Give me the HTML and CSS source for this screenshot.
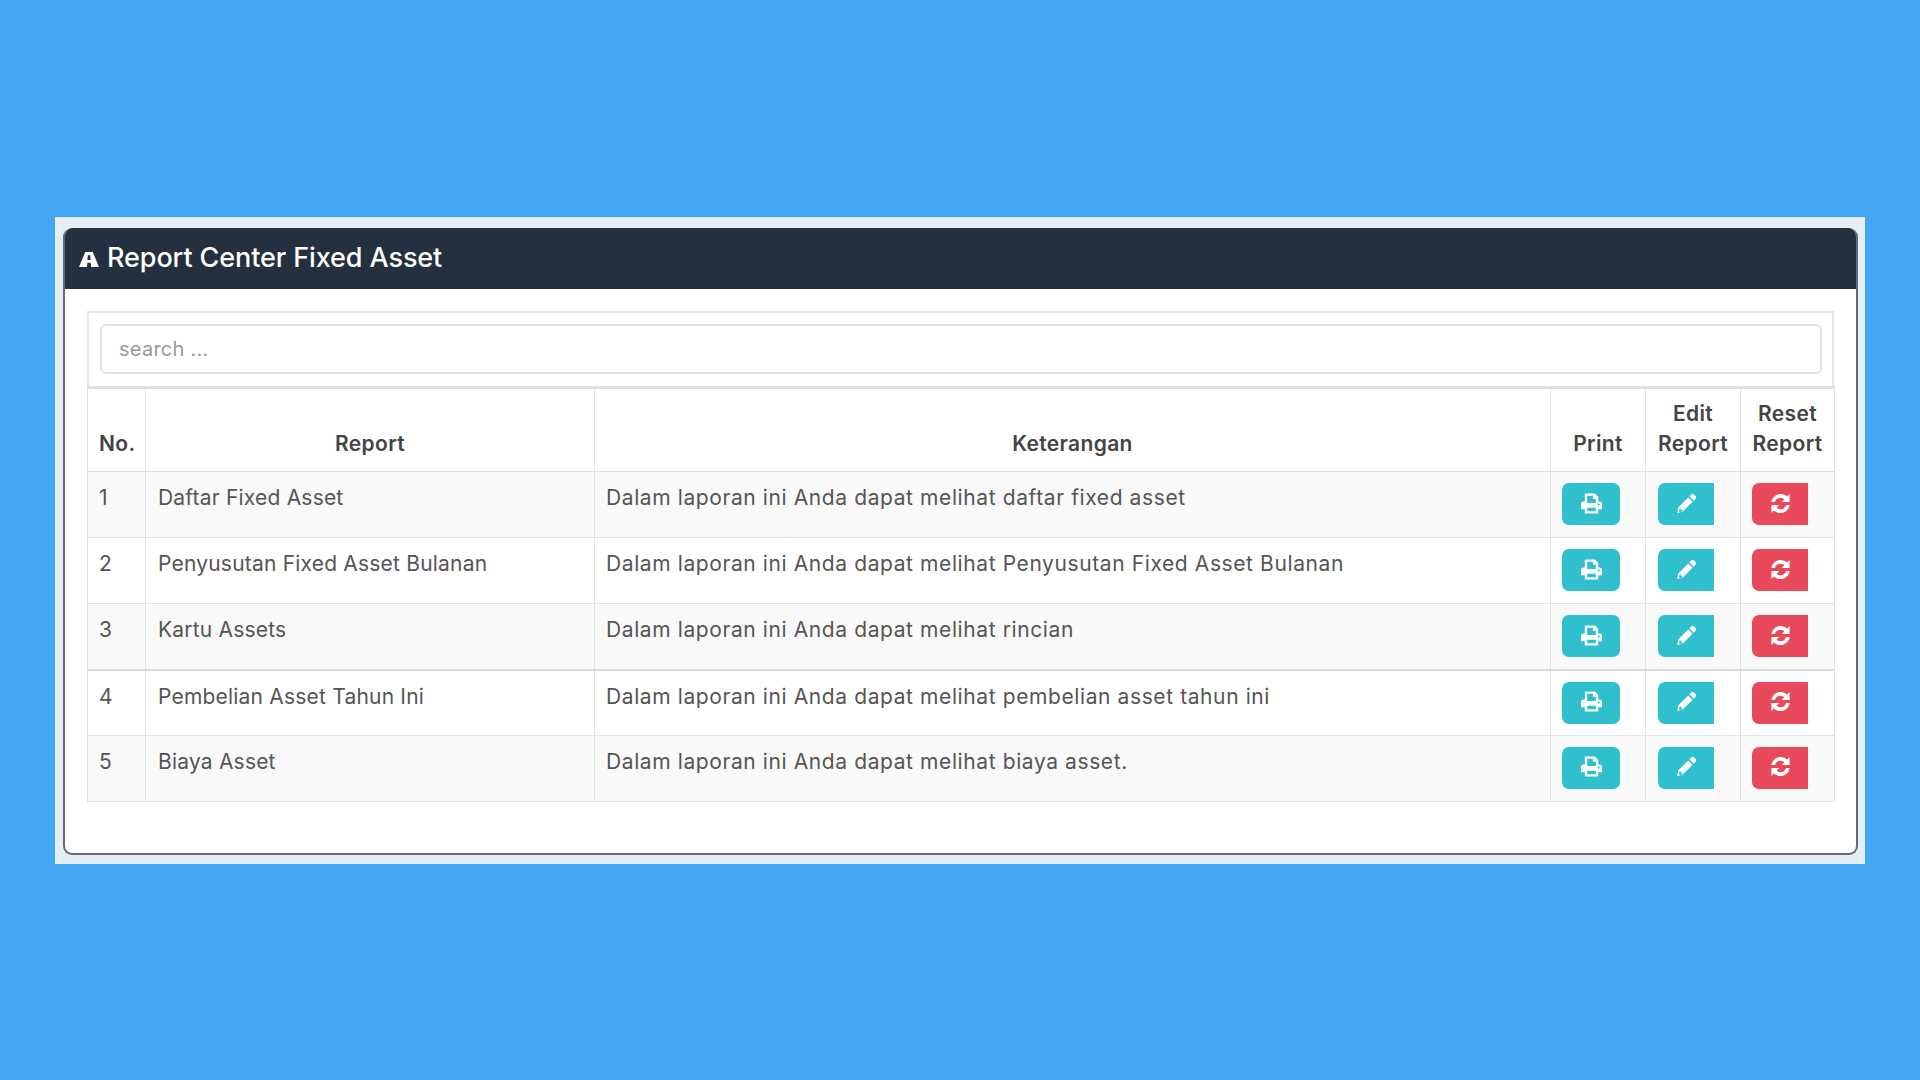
FILE: index.html
```html
<!DOCTYPE html>
<html lang="id">
<head>
<meta charset="utf-8">
<title>Report Center Fixed Asset</title>
<link rel="stylesheet" href="styles.css">
</head>
<body>
<svg class="defs" width="0" height="0" aria-hidden="true">
  <defs>
    <symbol id="i-print" viewBox="0 0 24 24">
      <path fill-rule="evenodd" d="M6 1.500h9.500L19 5v5h1.200A2.800 2.800 0 0 1 23 12.800V18h-4v4.500H5V18H1v-5.200A2.800 2.800 0 0 1 3.800 10H5V2.500a1 1 0 0 1 1-1zM7.500 4v7.500h9V7h-3V4zM7.500 16.500V20h9v-3.500zM19.500 12a1 1 0 1 0 .01 0z"/>
    </symbol>
    <symbol id="i-edit" viewBox="0 0 24 24">
      <path d="M17 2.500a2 2 0 0 1 2.800 0l1.700 1.700a2 2 0 0 1 0 2.800L19.500 9 15 4.500zM13.800 5.700l4.500 4.500L8 20.500l-5.800 1.500 1.300-6zM5 17l-.8 2.800 1 1L8 20l-.5-1.500H6V17z"/>
    </symbol>
    <symbol id="i-sync" viewBox="0 0 24 24">
      <path d="M12 2c2.700 0 5.100 1.100 6.900 2.800L21.500 2.200V10.500h-8.300l2.900-2.900A6.200 6.200 0 0 0 12 6c-2.800 0-5 1.700-5.900 4.500H2.400C3.300 5.600 7.300 2 12 2zM2.500 13.500h8.300l-2.900 2.900A6.200 6.200 0 0 0 12 18c2.800 0 5-1.700 5.900-4.500h3.700C20.700 18.400 16.700 22 12 22c-2.700 0-5.100-1.100-6.900-2.800L2.500 21.800z"/>
    </symbol>
  </defs>
</svg>
<main class="frame">
  <section class="card">
    <header class="card-head">
      <svg class="road" viewBox="0 0 24 20" aria-hidden="true"><path fill-rule="evenodd" d="M7.500 1h9L24 19h-9.500l-.5-5h-4l-.5 5H0zM10.500 5l-.4 5.500h3.800L13.500 5z"/></svg>
      <h1 class="card-title">Report Center Fixed Asset</h1>
    </header>
    <div class="card-body">
      <div class="search-box">
        <input class="search-input" type="text" placeholder="search ...">
      </div>
      <table class="report-table">
        <thead>
          <tr>
            <th class="col-no left">No.</th>
            <th class="col-report">Report</th>
            <th class="col-desc">Keterangan</th>
            <th class="col-print">Print</th>
            <th class="col-edit">Edit Report</th>
            <th class="col-reset">Reset Report</th>
          </tr>
        </thead>
        <tbody>
          <tr class="odd">
            <td>1</td><td class="name">Daftar Fixed Asset</td><td>Dalam laporan ini Anda dapat melihat daftar fixed asset</td>
            <td><a class="btn btn-print"><svg class="ico"><use href="#i-print"/></svg></a></td>
            <td><a class="btn btn-edit"><svg class="ico"><use href="#i-edit"/></svg></a></td>
            <td><a class="btn btn-reset"><svg class="ico"><use href="#i-sync"/></svg></a></td>
          </tr>
          <tr>
            <td>2</td><td class="name">Penyusutan Fixed Asset Bulanan</td><td>Dalam laporan ini Anda dapat melihat Penyusutan Fixed Asset Bulanan</td>
            <td><a class="btn btn-print"><svg class="ico"><use href="#i-print"/></svg></a></td>
            <td><a class="btn btn-edit"><svg class="ico"><use href="#i-edit"/></svg></a></td>
            <td><a class="btn btn-reset"><svg class="ico"><use href="#i-sync"/></svg></a></td>
          </tr>
          <tr class="odd">
            <td>3</td><td class="name">Kartu Assets</td><td>Dalam laporan ini Anda dapat melihat rincian</td>
            <td><a class="btn btn-print"><svg class="ico"><use href="#i-print"/></svg></a></td>
            <td><a class="btn btn-edit"><svg class="ico"><use href="#i-edit"/></svg></a></td>
            <td><a class="btn btn-reset"><svg class="ico"><use href="#i-sync"/></svg></a></td>
          </tr>
          <tr class="thick">
            <td>4</td><td class="name">Pembelian Asset Tahun Ini</td><td>Dalam laporan ini Anda dapat melihat pembelian asset tahun ini</td>
            <td><a class="btn btn-print"><svg class="ico"><use href="#i-print"/></svg></a></td>
            <td><a class="btn btn-edit"><svg class="ico"><use href="#i-edit"/></svg></a></td>
            <td><a class="btn btn-reset"><svg class="ico"><use href="#i-sync"/></svg></a></td>
          </tr>
          <tr class="odd">
            <td>5</td><td class="name">Biaya Asset</td><td>Dalam laporan ini Anda dapat melihat biaya asset.</td>
            <td><a class="btn btn-print"><svg class="ico"><use href="#i-print"/></svg></a></td>
            <td><a class="btn btn-edit"><svg class="ico"><use href="#i-edit"/></svg></a></td>
            <td><a class="btn btn-reset"><svg class="ico"><use href="#i-sync"/></svg></a></td>
          </tr>
        </tbody>
      </table>
    </div>
  </section>
</main>
</body>
</html>
```
FILE: styles.css
```css
* { box-sizing: border-box; }
html, body { margin: 0; height: 100%; }
body {
  background: #42a6f5;
  padding: 217px 55px 0;
  font-family: Inter, "Open Sans", sans-serif;
  color: #555;
  overflow: hidden;
}
.defs { position: absolute; }
.frame {
  width: 1810px;
  height: 647px;
  background: #e7edf5;
  padding: 11px 7px 9px 8px;
}
.card {
  height: 100%;
  background: #fff;
  border: 2px solid #5f6b75;
  border-top: 0;
  border-radius: 9px;
  overflow: hidden;
}
.card-head {
  margin: 0 -2px;
  height: 61px;
  background: #22303f;
  color: #fff;
  display: flex;
  align-items: center;
  gap: 8px;
  padding: 0 16px 2px;
}
.road { width: 20px; height: 17px; fill: #fff; margin-top: 4px; }
.card-title { margin: 0; font-size: 27px; font-weight: 500; letter-spacing: -0.1px; }
.card-body { padding: 22px 22px 0; }
.search-box {
  height: 75px;
  border: 2px solid #e6e6e6;
  border-bottom: 0;
  padding: 11px 10px 0 11px;
}
.search-input {
  display: block;
  width: 100%;
  height: 50px;
  border: 2px solid #e2e2e2;
  border-radius: 6px;
  padding: 0 17px;
  font: 400 20px Inter, sans-serif;
  letter-spacing: 0.25px;
  color: #555;
  background: #fff;
}
.search-input::placeholder { color: #9a9a9a; opacity: 1; }
.report-table {
  width: 1747px;
  table-layout: fixed;
  border-collapse: collapse;
  font-size: 21px;
  letter-spacing: 0.6px;
  line-height: 30px;
}
.report-table th,
.report-table td { border: 1px solid #e2e2e2; }
.report-table thead th {
  border-top: 3px solid #e0e0e0;
  border-bottom: 1px solid #dedede;
  vertical-align: bottom;
  text-align: center;
  font-weight: 600;
  letter-spacing: 0.35px;
  color: #444;
  padding: 10px 6px 12px;
}
.report-table th.left { text-align: left; padding-left: 11px; }
.col-no { width: 58px; }
.col-report { width: 449px; }
.col-desc { width: 956px; }
.col-print { width: 95px; }
.col-edit { width: 95px; }
.col-reset { width: 94px; }
.report-table td {
  height: 66px;
  vertical-align: top;
  padding: 11px;
}
.report-table td.name { padding-left: 12px; letter-spacing: 0.2px; }
.report-table tr.odd td { background: #f9f9f9; }
.report-table tr.thick td { height: 65px; border-top: 2px solid #dcdcdc; }
.btn {
  display: flex;
  align-items: center;
  justify-content: center;
  height: 42px;
  width: 56px;
  border-radius: 7px 0 0 7px;
  color: #fff;
}
.btn-print { width: 58px; background: #2fbfcd; border-radius: 7px; }
.btn-edit { background: #2fbfcd; margin-left: 1px; }
.btn-reset { background: #e84a5c; }
.ico { width: 23px; height: 23px; fill: #fff; margin-bottom: 2px; }
```
